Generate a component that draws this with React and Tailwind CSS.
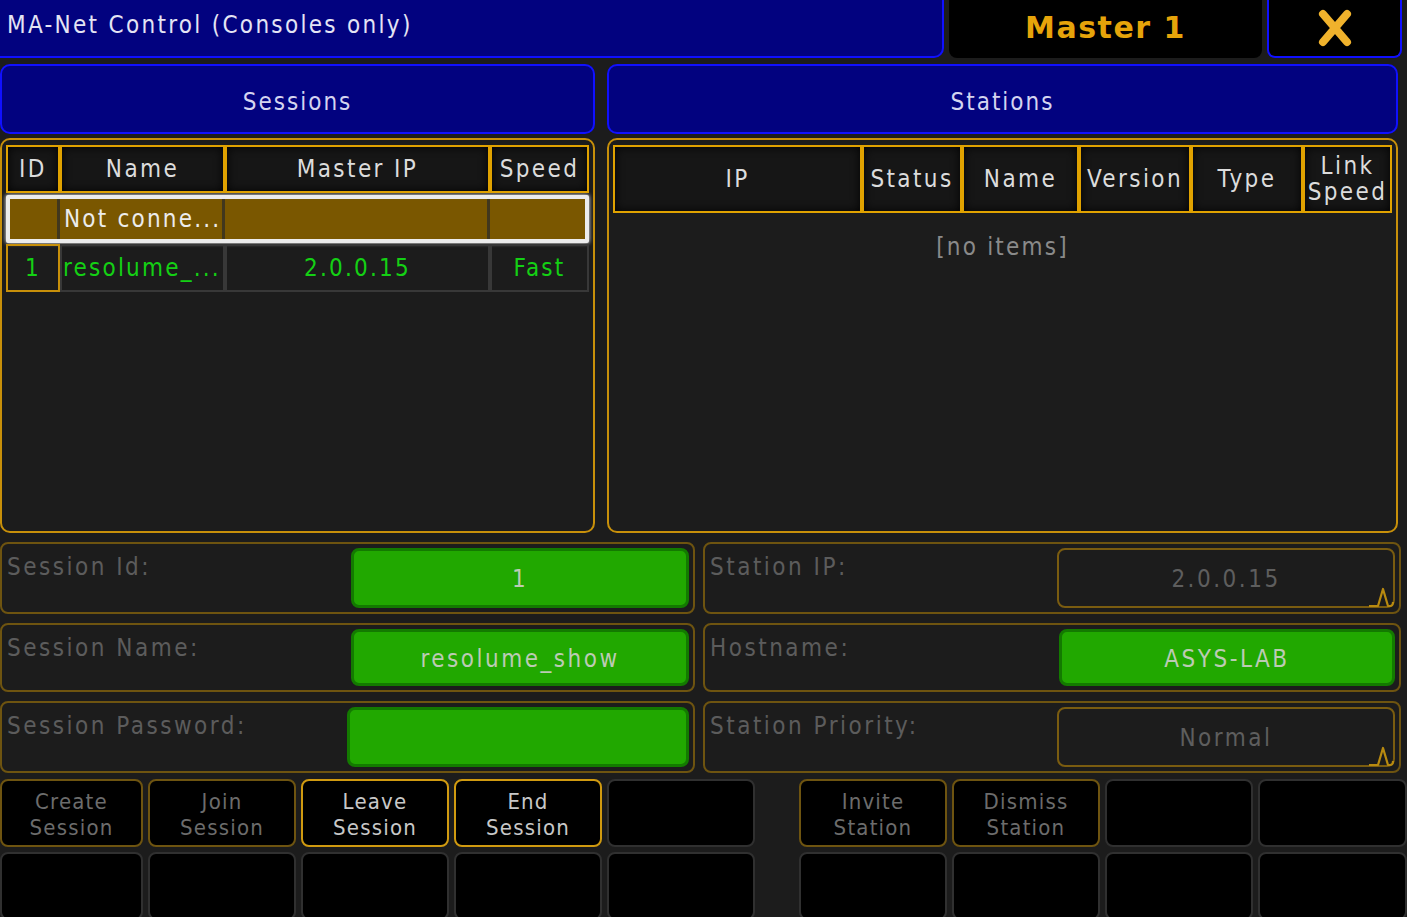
import React from "react";

const F = { fontFamily: '"DejaVu Sans Condensed", "DejaVu Sans", sans-serif' };

function Notch() {
  return (
    <svg className="absolute right-[-2px] bottom-[-2px]" width="26" height="22" viewBox="0 0 26 22">
      <path d="M0 20 L9 20 L14 3 L19 20 L21 20 Q24 20 24 16" fill="#1c1c1c" stroke="#b88a10" strokeWidth="2.2" strokeLinejoin="round" />
    </svg>
  );
}

function FieldRow({ label, children, h }) {
  return (
    <div className={`flex ${h} rounded-[8px] border-2 border-[#6e5410] bg-[#1c1c1c] p-[4px]`}>
      <div className="flex-1 pl-[1px] pt-[5px] text-[24px] leading-[28px] tracking-[2.5px] text-[#5c5c5c]">{label}</div>
      {children}
    </div>
  );
}

function GreenInput({ text, w }) {
  return (
    <div className={`${w} flex h-full items-center justify-center rounded-[8px] border-[3px] border-[#137a00] bg-[#21a800] pt-[2px] text-[24px] tracking-[2.5px] text-[#bccbb4]`}>
      {text}
    </div>
  );
}

function OutlineInput({ text, w }) {
  return (
    <div className={`${w} relative flex h-full items-center justify-center rounded-[8px] border-2 border-[#7a5c10] bg-[#1c1c1c] pt-[2px] text-[24px] tracking-[2.5px] text-[#5e5e5e]`}>
      {text}
      <Notch />
    </div>
  );
}

function Btn({ l1, l2, w, variant }) {
  const border =
    variant === "on"
      ? "border-[#d09a10] text-[#c8c8c8]"
      : variant === "dim"
      ? "border-[#6e5410] text-[#6c6c6c]"
      : "border-[#303030]";
  return (
    <div className={`${w} flex h-full flex-col items-center justify-center rounded-[8px] border-2 bg-black pt-[3px] text-[22px] leading-[26px] tracking-[1.2px] ${border}`}>
      {l1 && <div>{l1}</div>}
      {l2 && <div>{l2}</div>}
    </div>
  );
}

function HCell({ children, w, twoLine }) {
  return (
    <div
      className={`${w} flex h-full items-center justify-center border-2 border-[#e0a200] bg-[#161616] shadow-[inset_0_0_10px_rgba(0,0,0,0.9)] text-[24px] tracking-[2.4px] text-[#dcdcdc] ${twoLine ? "leading-[26px] text-center" : ""}`}
    >
      {children}
    </div>
  );
}

export default function App() {
  return (
    <div style={F} className="relative h-[917px] w-[1407px] overflow-hidden bg-[#1c1c1c]">
      {/* top bar */}
      <div className="flex h-[58px] gap-[5px] pr-[5px]">
        <div className="flex w-[944px] items-center rounded-br-[10px] border-b-2 border-r-2 border-[#1010ff] bg-[#02027f] pl-[7px] pb-[6px] text-[24px] tracking-[2.3px] text-[#e4e4f4]">
          MA-Net Control (Consoles only)
        </div>
        <div className="flex w-[313px] items-center justify-center rounded-b-[8px] bg-black pb-[4px] text-[30px] font-semibold tracking-[1.5px] text-[#e6a40a]" style={{ fontFamily: '"DejaVu Sans", sans-serif' }}>
          Master 1
        </div>
        <div className="flex flex-1 items-center justify-center rounded-b-[8px] border-x-2 border-b-2 border-[#1010ff] bg-black">
          <svg width="40" height="40" viewBox="0 0 40 40">
            <path d="M8 6 L32 34 M32 6 L8 34" stroke="#f0b22c" strokeWidth="8" strokeLinecap="round" />
          </svg>
        </div>
      </div>

      {/* section headers */}
      <div className="mt-[6px] flex h-[70px] gap-[12px] pr-[9px]">
        <div className="flex w-[595px] items-center justify-center rounded-[10px] border-2 border-[#1010ff] bg-[#02027f] pt-[5px] text-[24px] tracking-[2px] text-[#d4d4f0]">
          Sessions
        </div>
        <div className="flex flex-1 items-center justify-center rounded-[10px] border-2 border-[#1010ff] bg-[#02027f] pt-[5px] text-[24px] tracking-[2px] text-[#d4d4f0]">
          Stations
        </div>
      </div>

      {/* tables */}
      <div className="mt-[4px] flex h-[395px] gap-[12px] pr-[9px]">
        <div className="w-[595px] rounded-[10px] border-2 border-[#c8900a] px-[4px] pt-[5px]">
          <div className="flex h-[48px]">
            <HCell w="w-[54px]">ID</HCell>
            <HCell w="w-[165px]">Name</HCell>
            <HCell w="w-[265px]">Master IP</HCell>
            <HCell w="flex-1">Speed</HCell>
          </div>
          <div className="mt-[2px] flex h-[48px] rounded-[2px] border-[4px] border-[#ececec] bg-[#7a5700] shadow-[0_0_4px_#fff] text-[24px] tracking-[2.2px] text-[#ececec]">
            <div className="w-[50px] border-r-[3px] border-[#2a2a2a]/70" />
            <div className="flex w-[165px] items-center border-r-[3px] border-[#2a2a2a]/70 pl-[4px]">Not conne...</div>
            <div className="w-[265px] border-r-[3px] border-[#2a2a2a]/70" />
            <div className="flex-1" />
          </div>
          <div className="mt-[1px] flex h-[48px] text-[24px] tracking-[2.2px] text-[#14d014]">
            <div className="flex w-[54px] items-center justify-center border-2 border-[#c8900a]">1</div>
            <div className="flex w-[165px] items-center border-2 border-[#383838] pl-[1px]">resolume_...</div>
            <div className="flex w-[265px] items-center justify-center border-2 border-[#383838]">2.0.0.15</div>
            <div className="flex flex-1 items-center justify-center border-2 border-[#383838]">Fast</div>
          </div>
        </div>
        <div className="flex-1 rounded-[10px] border-2 border-[#c8900a] px-[4px] pt-[5px]">
          <div className="flex h-[68px]">
            <HCell w="w-[249px]">IP</HCell>
            <HCell w="w-[100px]">Status</HCell>
            <HCell w="w-[117px]">Name</HCell>
            <HCell w="w-[112px]">Version</HCell>
            <HCell w="w-[112px]">Type</HCell>
            <HCell w="flex-1" twoLine>
              <div>Link<br />Speed</div>
            </HCell>
          </div>
          <div className="pt-[16px] text-center text-[24px] tracking-[2.2px] text-[#8a8a8a]">[no items]</div>
        </div>
      </div>

      {/* fields */}
      <div className="mt-[9px] flex gap-[8px] pr-[6px]">
        <div className="flex w-[695px] flex-col gap-[9px]">
          <FieldRow label="Session Id:" h="h-[72px]">
            <GreenInput text="1" w="w-[338px]" />
          </FieldRow>
          <FieldRow label="Session Name:" h="h-[69px]">
            <GreenInput text="resolume_show" w="w-[338px]" />
          </FieldRow>
          <FieldRow label="Session Password:" h="h-[72px]">
            <GreenInput text="" w="w-[342px]" />
          </FieldRow>
        </div>
        <div className="flex flex-1 flex-col gap-[9px]">
          <FieldRow label="Station IP:" h="h-[72px]">
            <OutlineInput text="2.0.0.15" w="w-[338px]" />
          </FieldRow>
          <FieldRow label="Hostname:" h="h-[69px]">
            <GreenInput text="ASYS-LAB" w="w-[336px]" />
          </FieldRow>
          <FieldRow label="Station Priority:" h="h-[72px]">
            <OutlineInput text="Normal" w="w-[338px]" />
          </FieldRow>
        </div>
      </div>

      {/* buttons */}
      <div className="mt-[6px] flex h-[68px] gap-[5px]">
        <Btn w="w-[143px]" l1="Create" l2="Session" variant="dim" />
        <Btn w="w-[148px]" l1="Join" l2="Session" variant="dim" />
        <Btn w="w-[148px]" l1="Leave" l2="Session" variant="on" />
        <Btn w="w-[148px]" l1="End" l2="Session" variant="on" />
        <Btn w="w-[148px]" />
        <div className="w-[34px]" />
        <Btn w="w-[148px]" l1="Invite" l2="Station" variant="dim" />
        <Btn w="w-[148px]" l1="Dismiss" l2="Station" variant="dim" />
        <Btn w="w-[148px]" />
        <Btn w="flex-1" />
      </div>
      <div className="mt-[5px] flex h-[68px] gap-[5px]">
        <Btn w="w-[143px]" />
        <Btn w="w-[148px]" />
        <Btn w="w-[148px]" />
        <Btn w="w-[148px]" />
        <Btn w="w-[148px]" />
        <div className="w-[34px]" />
        <Btn w="w-[148px]" />
        <Btn w="w-[148px]" />
        <Btn w="w-[148px]" />
        <Btn w="flex-1" />
      </div>
    </div>
  );
}
